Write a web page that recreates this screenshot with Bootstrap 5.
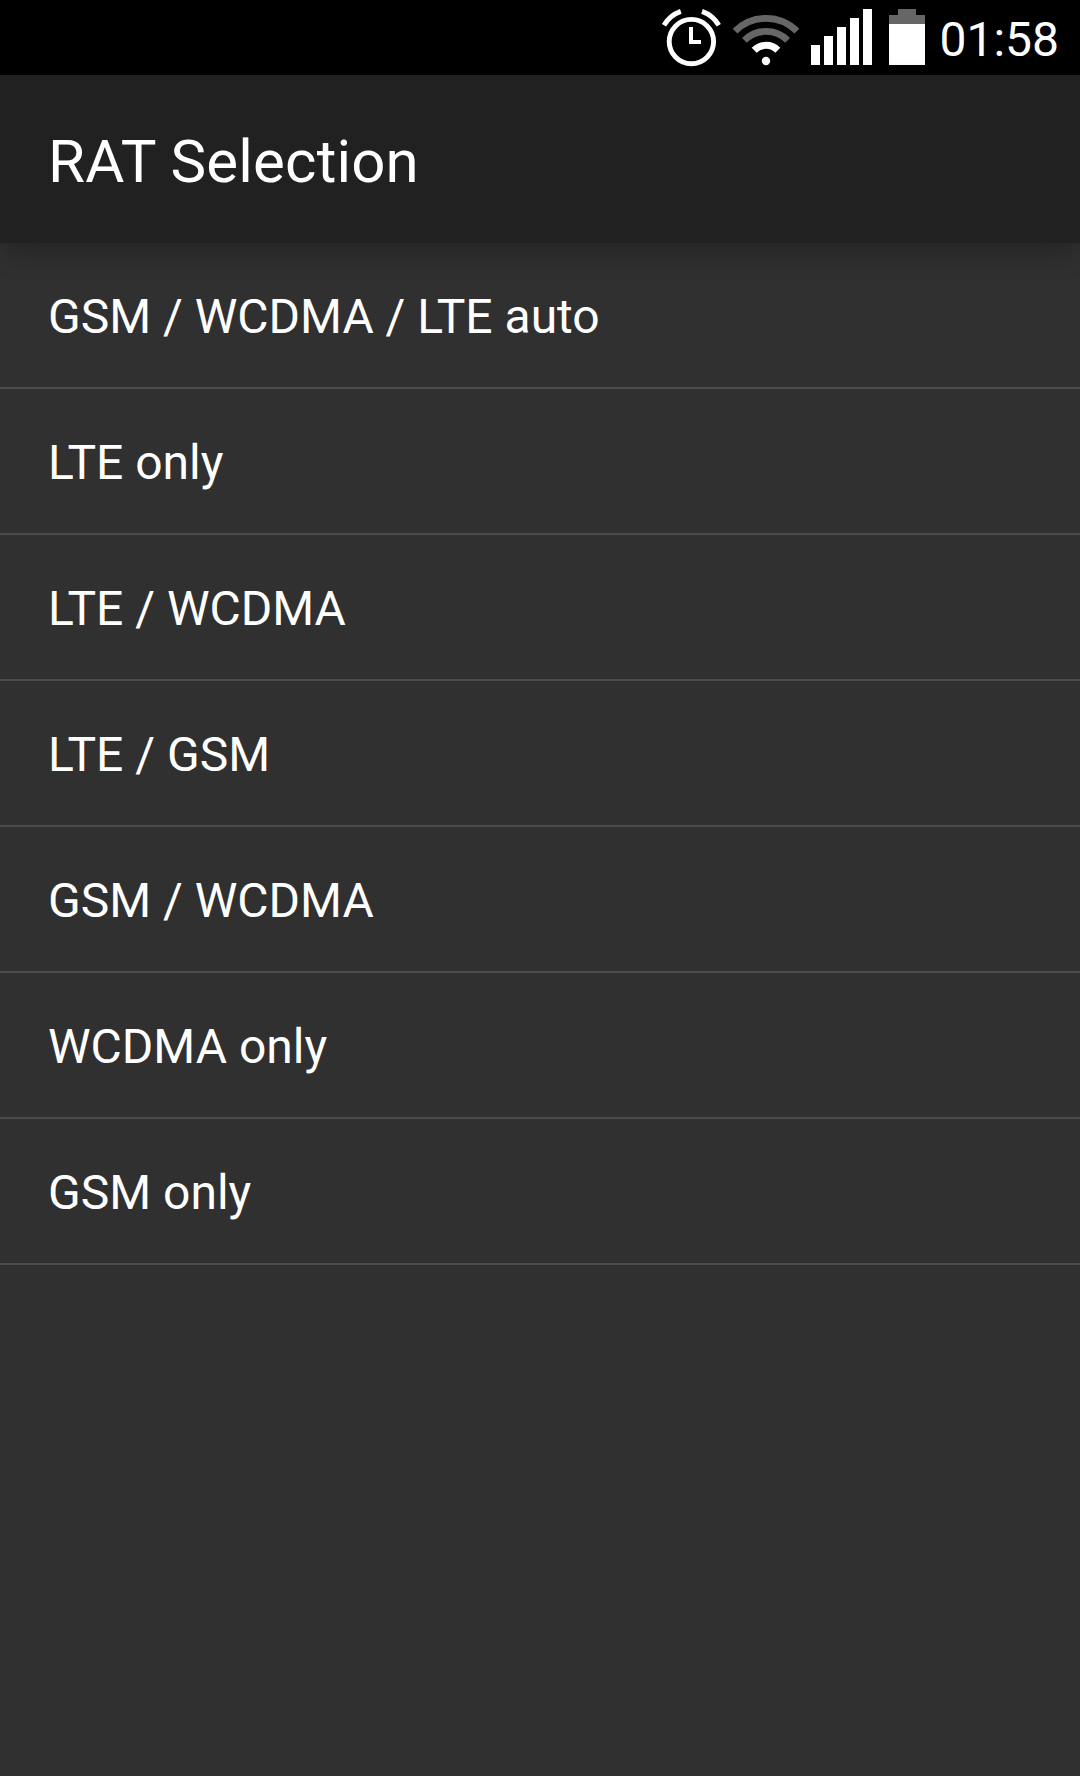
<!DOCTYPE html>
<html lang="en">
<head>
<meta charset="utf-8">
<meta name="viewport" content="width=device-width, initial-scale=1">
<title>RAT Selection</title>
<link href="https://cdn.jsdelivr.net/npm/bootstrap@5.3.0/dist/css/bootstrap.min.css" rel="stylesheet">
<style>
  body { background: #303030; color: #fff; font-family: Roboto, "Liberation Sans", sans-serif; font-size: 48px; line-height: 56px; min-height: 100vh; overflow: hidden; }
  .status-bar { height: 75px; background: #000; padding-right: 21px; }
  .status-bar svg { display: block; }
  .status-clock { padding-top: 5px; }
  .app-bar { height: 168px; background: #212121; padding: 6px 48px 0; box-shadow: 0 10px 28px -4px rgba(0,0,0,.32); }
  .app-title { font-size: 60px; line-height: 70px; font-weight: 400; letter-spacing: .17px; }
  .rat-list { --bs-list-group-bg: transparent; --bs-list-group-color: #fff; --bs-list-group-border-radius: 0; }
  .rat-list .list-group-item { height: 146px; padding: 3px 48px 0; border: 0; border-bottom: 2px solid #4a4a4a; background: transparent; color: #fff; }
</style>
</head>
<body>
<header class="status-bar d-flex justify-content-end align-items-center">
  <!-- alarm -->
  <svg width="70" height="75" viewBox="660 0 70 75" fill="none" stroke="#fff">
    <circle cx="691.4" cy="41.6" r="22.2" stroke-width="4.9"/>
    <path d="M691 27V42H701" stroke-width="4"/>
    <path d="M664 25.2A32.4 32.4 0 0 1 680.8 11.4M702 11.4A32.4 32.4 0 0 1 718.8 25.2" stroke-width="4.9"/>
  </svg>
  <!-- wifi -->
  <svg width="75" height="75" viewBox="730 0 75 75" fill="none">
    <g stroke="#666" stroke-width="6.8">
      <path d="M735.1 31.1A43.7 43.7 0 0 1 796.9 31.1"/>
      <path d="M744.4 40.4A30.5 30.5 0 0 1 787.6 40.4"/>
    </g>
    <path d="M754.2 50.2A16.7 16.7 0 0 1 777.8 50.2" stroke="#fff" stroke-width="7"/>
    <circle cx="766" cy="61" r="4.2" fill="#fff"/>
  </svg>
  <!-- signal -->
  <svg width="75" height="75" viewBox="805 0 75 75" fill="#fff">
    <path d="M811 45h9v20h-9zM824 36h9v29h-9zM837 27h9v38h-9zM850 18h9v47h-9zM863 9h9v56h-9z"/>
  </svg>
  <!-- battery -->
  <svg width="59" height="75" viewBox="880 0 59 75">
    <path d="M898 9h18v6h9v9h-36v-9h9z" fill="#666"/>
    <path d="M889 24h36v41h-36z" fill="#fff"/>
  </svg>
  <span class="status-clock">01:58</span>
</header>
<nav class="app-bar d-flex align-items-center position-relative">
  <h1 class="app-title mb-0">RAT Selection</h1>
</nav>
<main>
  <ul class="list-group rat-list">
    <li class="list-group-item d-flex align-items-center">GSM / WCDMA / LTE auto</li>
    <li class="list-group-item d-flex align-items-center">LTE only</li>
    <li class="list-group-item d-flex align-items-center">LTE / WCDMA</li>
    <li class="list-group-item d-flex align-items-center">LTE / GSM</li>
    <li class="list-group-item d-flex align-items-center">GSM / WCDMA</li>
    <li class="list-group-item d-flex align-items-center">WCDMA only</li>
    <li class="list-group-item d-flex align-items-center">GSM only</li>
  </ul>
</main>
<script src="https://cdn.jsdelivr.net/npm/bootstrap@5.3.0/dist/js/bootstrap.bundle.min.js"></script>
</body>
</html>
